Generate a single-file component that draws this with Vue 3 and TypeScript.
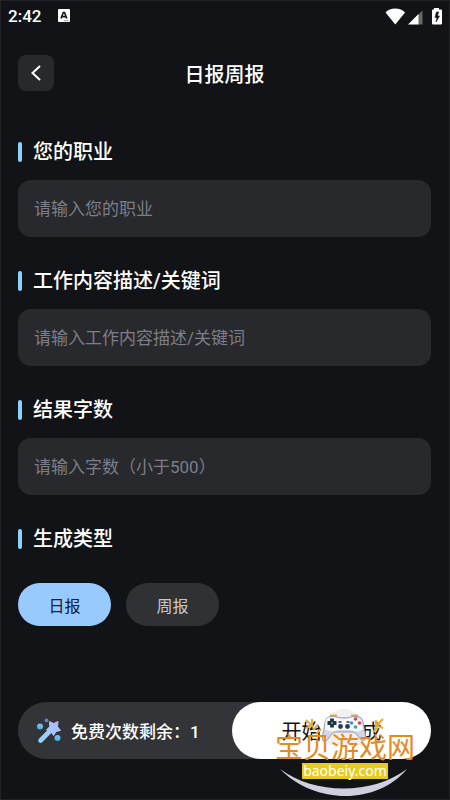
<script setup lang="ts">
import { ref } from 'vue'

interface Field {
  id: string
  label: string
  placeholder: string
}

const fields: Field[] = [
  { id: 'job', label: '您的职业', placeholder: '请输入您的职业' },
  { id: 'content', label: '工作内容描述/关键词', placeholder: '请输入工作内容描述/关键词' },
  { id: 'words', label: '结果字数', placeholder: '请输入字数（小于500）' },
]
const values = ref<Record<string, string>>({ job: '', content: '', words: '' })
const types: string[] = ['日报', '周报']
const selected = ref<string>('日报')
const remaining = ref<number>(1)
</script>

<template>
  <div class="screen">
    <div class="status">
      <span class="time">2:42</span>
      <svg class="badge" width="12" height="13" viewBox="0 0 12 13">
        <rect width="12" height="13" rx="1" fill="#fff" />
        <path d="M3 9.5 5.3 3.5h1.2L8.8 9.5M4 7.6h3.8" fill="none" stroke="#15161a" stroke-width="1.6" />
        <path d="M6 11.7h4.5" stroke="#999" stroke-width="1" />
      </svg>
      <svg class="signals" width="58" height="18" viewBox="0 0 58 18">
        <path d="M.5 5.5C5 .3 15.500 .3 20 5.500L10.300 17.500Z" fill="#fff" />
        <path d="M37.500 3.500V17.500H33V8Z" fill="#66676a" />
        <path d="M23 17.500 33.500 7V17.500Z" fill="#fff" />
        <path d="M49 2.500V1h5v1.500h2q1 0 1 1V16.500q0 1-1 1h-8q-1 0-1-1V3.500q0-1 1-1Z" fill="#fff" />
        <path d="M51.500 5 50 10.500h2L51 15l3.500-6h-2L53.500 5Z" fill="#121317" stroke="#121317" stroke-width=".6" />
      </svg>
    </div>

    <header class="header">
      <button class="back" type="button" aria-label="返回">
        <svg width="12" height="16" viewBox="0 0 12 16">
          <path d="M10 1 2.500 8l7.500 7" fill="none" stroke="#fff" stroke-width="2" />
        </svg>
      </button>
      <h1>日报周报</h1>
    </header>

    <main class="form">
      <div v-for="f in fields" :key="f.id" class="group">
        <label class="heading" :for="f.id">{{ f.label }}</label>
        <input :id="f.id" v-model="values[f.id]" type="text" :placeholder="f.placeholder" />
      </div>
      <section class="group types">
        <h2 class="heading">生成类型</h2>
        <div class="pills">
          <button
            v-for="t in types"
            :key="t"
            type="button"
            class="pill"
            :class="{ active: selected === t }"
            @click="selected = t"
          >{{ t }}</button>
        </div>
      </section>
    </main>

    <footer class="bar">
      <div class="quota">
        <svg width="26" height="26" viewBox="0 0 26 26">
          <defs>
            <linearGradient id="wand" gradientUnits="userSpaceOnUse" x1="3" y1="23" x2="25" y2="9">
              <stop offset="0" stop-color="#8fd2fa" />
              <stop offset=".65" stop-color="#a3caff" />
              <stop offset="1" stop-color="#bcb2f4" />
            </linearGradient>
            <linearGradient id="dot" x1="0" y1="0" x2="0" y2="1">
              <stop offset="0" stop-color="#82bcf5" />
              <stop offset="1" stop-color="#43b5e2" />
            </linearGradient>
          </defs>
          <path d="M4.500 22.500 15 12" stroke="url(#wand)" stroke-width="4.600" stroke-linecap="round" />
          <path d="M13.500 3.500 17.500 5.500 22 3.500 21.500 8.500 24.500 12.500 20 13.500 17.500 17.500 15 13.500 10.500 12 13.800 8.500Z" fill="url(#wand)" stroke="url(#wand)" stroke-linejoin="round" />
          <circle cx="4" cy="8.500" r="3" fill="url(#dot)" />
          <circle cx="10.500" cy="2.300" r="1.900" fill="#707fc1" />
          <circle cx="21.500" cy="20" r="3" fill="url(#dot)" />
        </svg>
        <span>免费次数剩余：{{ remaining }}</span>
      </div>
      <button class="start" type="button"><span>开始</span><span>生成</span></button>

      <div class="mark">
        <svg class="art" width="140" height="92" viewBox="0 0 140 92">
          <circle cx="69" cy="20" r="18" fill="#f0f0f1" />
          <path d="M50 20h37v18H50Z" fill="#f0f0f1" />
          <g stroke="#eda92c" stroke-width="2" fill="none">
            <path d="m31 13 5 5M37 12v8M31 21l7-3M38 23l5-5M41 27l5-5" />
            <path d="m108 12-6 6M101 13v9M108 21l-8-3M98 25l5-4" />
            <path d="M55 8.500h7M76 8.500h7" />
          </g>
          <path d="M54 10C49 11 50 19 48 26c-1 6-1 9 2 8 4 0 5-8 10-9h18c5 1 6 9 10 8 3 1 3-2 2-8-2-7-1-14-6-15-5-2-8 1-15 1s-10-3-15-1Z" fill="#d5d6e5" stroke="#85879a" stroke-width=".8" />
          <path d="M54 10.500C49 11.500 51 17 50 22c5 4 11 2 14 1h11c3 1 9 3 13-1-1-6-1-10-5-11-5-2-8 1-14 1s-10-3-15-1.500Z" fill="#f7f7fa" />
          <path d="M57 11.500v9M52.500 16h9" stroke="#1e3442" stroke-width="3.800" />
          <circle cx="57" cy="16" r="1.100" fill="#58b4bd" />
          <circle cx="80.500" cy="12" r="1.800" fill="#dc414e" />
          <circle cx="76.500" cy="16" r="1.800" fill="#4194c5" />
          <circle cx="84.500" cy="16" r="1.800" fill="#dc414e" />
          <circle cx="80.500" cy="20" r="1.800" fill="#31a5b4" />
          <path d="M63.500 15h3M71.500 15h3" stroke="#263b4a" stroke-width="1.600" />
          <circle cx="65.500" cy="19.500" r="2.400" fill="#263b4a" />
          <circle cx="72.500" cy="19.500" r="2.400" fill="#263b4a" />
          <path d="M5 62C40 88 97 88 132 62C102 98 40 98 5 62Z" fill="#cfd0df" />
        </svg>
        <div class="site">宝贝游戏网</div>
        <div class="domain">baobeiy.com</div>
      </div>
    </footer>
  </div>
</template>

<style>
body {
  background: #121317;
}
</style>

<style scoped>
* {
  box-sizing: border-box;
}
.screen {
  min-height: 100vh;
  display: flex;
  flex-direction: column;
  padding: 0 18px 40px 17px;
  border: 1px solid #222327;
  background: #121317;
  color: #fff;
  font-family: Roboto, "Noto Sans CJK SC", sans-serif;
}
button,
input {
  font-family: inherit;
  border: 0;
}
.status {
  display: flex;
  align-items: center;
  height: 29px;
  margin: 0 -12px 0 -10px;
}
.time {
  font-size: 17px;
  font-weight: 500;
}
.badge {
  margin-left: 17px;
}
.signals {
  margin-left: auto;
}
.header {
  display: grid;
  grid-template-columns: 36px 1fr 36px;
  align-items: center;
  margin-top: 25px;
}
.back {
  display: flex;
  align-items: center;
  justify-content: center;
  width: 36px;
  height: 36px;
  padding: 0;
  border-radius: 8px;
  background: #28292d;
}
h1 {
  margin: 0;
  padding-top: 4px;
  font-size: 20px;
  line-height: 28px;
  font-weight: 500;
  text-align: center;
}
.form {
  display: flex;
  flex-direction: column;
  gap: 30px;
  margin-top: 47px;
}
.group {
  display: flex;
  flex-direction: column;
  gap: 14px;
}
.types {
  gap: 30px;
}
.heading {
  display: flex;
  align-items: center;
  gap: 11px;
  margin: 0;
  font-size: 20px;
  line-height: 28px;
  font-weight: 500;
}
.heading::before {
  content: "";
  width: 4px;
  height: 20px;
  border-radius: 2px;
  background: #8dd2ff;
}
input {
  width: 100%;
  height: 57px;
  padding: 0 16px;
  border-radius: 13px;
  outline: 0;
  background: #28292d;
  color: #fff;
  font-size: 17px;
}
input::placeholder {
  color: #7c7e88;
  opacity: 1;
}
.pills {
  display: flex;
  gap: 15px;
}
.pill {
  width: 93px;
  height: 43px;
  padding: 0;
  border-radius: 22px;
  background: #303134;
  color: #c9c9cb;
  font-size: 16px;
}
.pill.active {
  background: #98caff;
  color: #10202f;
}
.bar {
  position: relative;
  display: flex;
  height: 57px;
  margin-top: auto;
  border-radius: 29px;
  background: #333437;
}
.quota {
  flex: 1;
  display: flex;
  align-items: center;
  gap: 9px;
  padding-left: 18px;
  font-size: 17px;
  font-weight: 500;
  white-space: nowrap;
}
.start {
  display: flex;
  align-items: center;
  justify-content: center;
  gap: 20px;
  width: 199px;
  padding: 0;
  border-radius: 29px;
  background: #fff;
  color: #121317;
  font-size: 20px;
}
.mark {
  position: absolute;
  top: 5px;
  right: 16px;
  width: 140px;
  height: 92px;
  display: flex;
  flex-direction: column;
  align-items: center;
  padding-top: 28px;
  pointer-events: none;
}
.art {
  position: absolute;
  top: 0;
  left: 0;
}
.site {
  position: relative;
  color: #e68a20;
  font-size: 28px;
  line-height: 28px;
  white-space: nowrap;
}
.domain {
  position: relative;
  width: 86px;
  background: #e8cb22;
  color: #fff;
  font-family: "Noto Sans", sans-serif;
  font-size: 14px;
  line-height: 16px;
  text-align: center;
}
</style>
